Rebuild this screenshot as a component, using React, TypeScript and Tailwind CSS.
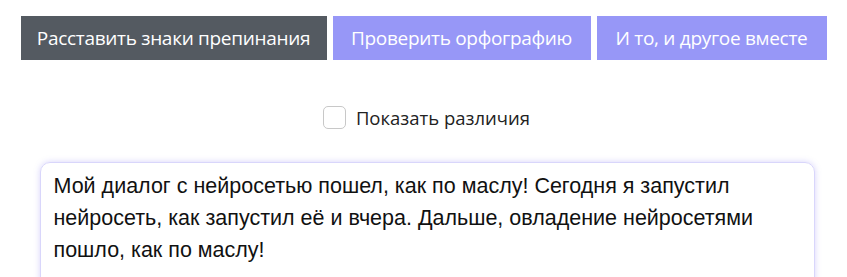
import React, { useState } from "react";

const text =
  "Мой диалог с нейросетью пошел, как по маслу! Сегодня я запустил нейросеть, как запустил её и вчера. Дальше, овладение нейросетями пошло, как по маслу!";

export default function App() {
  const [mode, setMode] = useState(0);
  const [diff, setDiff] = useState(false);
  const buttons = [
    { label: "Расставить знаки препинания", w: "w-[306px]" },
    { label: "Проверить орфографию", w: "w-[258px]" },
    { label: "И то, и другое вместе", w: "w-[230px]" },
  ];

  return (
    <div className="min-h-screen bg-white font-['Open_Sans',sans-serif]">
      <div className="mx-auto w-[806px] pt-4">
        <div className="flex gap-[6px]">
          {buttons.map((b, i) => (
            <button
              key={b.label}
              onClick={() => setMode(i)}
              className={`${b.w} h-[44px] whitespace-nowrap text-[19px] tracking-[-0.3px] text-white ${
                mode === i ? "bg-[#545a61]" : "bg-[#9797f7]"
              }`}
            >
              {b.label}
            </button>
          ))}
        </div>

        <label className="mt-[44px] flex items-center justify-center gap-[10px] text-[18.5px] text-[#222]">
          <input
            type="checkbox"
            checked={diff}
            onChange={(e) => setDiff(e.target.checked)}
            className="ml-[6px] h-[23px] w-[23px] appearance-none rounded-[5px] border border-[#c8c8c8] bg-white"
          />
          Показать различия
        </label>

        <div className="ml-[19px] mt-[30px] w-[775px] rounded-t-[10px] border border-[#d9d6fb] px-[13px] pt-[7px] pb-4 shadow-[0_0_6px_rgba(140,130,240,0.35)] font-['Liberation_Sans',Arial,sans-serif] text-[21.5px] leading-[32px] text-[#111]">
          {text}
        </div>
      </div>
    </div>
  );
}
